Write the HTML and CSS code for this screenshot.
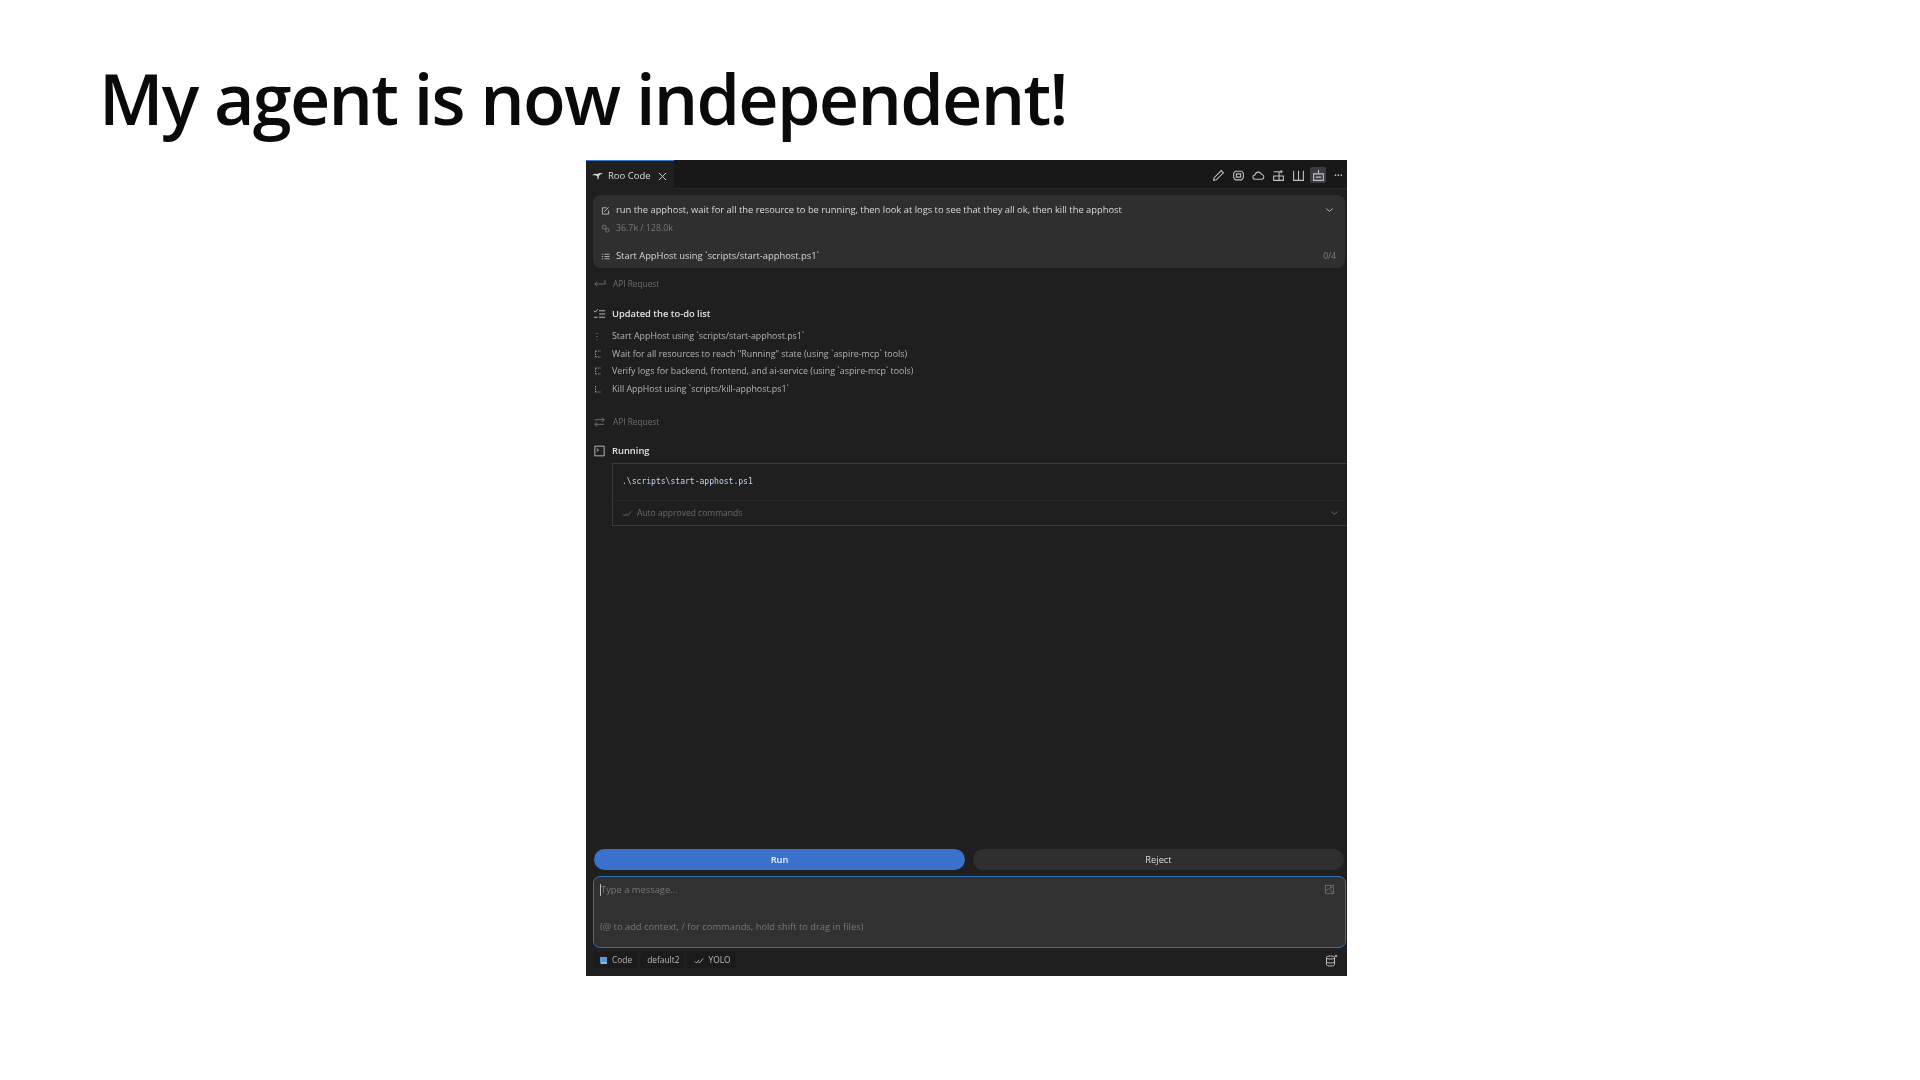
FILE: index.html
```html
<!DOCTYPE html>
<html lang="en">
<head>
<meta charset="utf-8">
<title>My agent is now independent!</title>
<link rel="stylesheet" href="styles.css">
</head>
<body>
<main class="slide">
  <h1 class="title">My agent is now independent!</h1>
  <section class="panel">
    <header class="tabbar">
      <div class="tab">
        <svg class="ic-roo" viewBox="0 0 12 8"><path d="M0 3.2 3 1.600 6 1.800 8 .6 12 1 8.600 2.600 7.400 4.200 7.200 7.600 6.200 7.600 5.600 4 3.400 3.200Z" fill="#d8d8d8"/></svg>
        <span class="tab-name">Roo Code</span>
        <svg class="ic-close" viewBox="0 0 10 10"><path d="M1 1 9 9M9 1 1 9" stroke="#d0d0d0" stroke-width="1.100"/></svg>
      </div>
      <div class="toolbar">
        <span class="tool"><svg viewBox="0 0 12 12"><path d="M1.500 10.500 2 8 8.500 1.500 10.500 3.500 4 10Z" class="ln"/></svg></span>
        <span class="tool"><svg viewBox="0 0 12 12"><path d="M3 2h6l1.500 2v4L9 10H3L1.500 8V4Z" class="ln"/><path d="M4 4.500h4v3H4Z" class="ln"/></svg></span>
        <span class="tool"><svg viewBox="0 0 12 12"><path d="M3 9.500a2 2 0 0 1-.3-4A3.300 3.300 0 0 1 9 5a2.300 2.300 0 0 1 .2 4.500Z" class="ln"/></svg></span>
        <span class="tool"><svg viewBox="0 0 12 12"><path d="M1.500 2.500h5v8h4v-4h-9v4h5V2.500M8.500 1v3M7 2.500h3" class="ln"/></svg></span>
        <span class="tool"><svg viewBox="0 0 12 12"><path d="M1.500 1.500v9h9v-9M6 1.500v9" class="ln"/></svg></span>
        <span class="tool tool-on"><svg viewBox="0 0 12 12"><path d="M1.500 4.500h9v6h-9ZM6 1v3.500M3.500 7.500h5" class="ln"/></svg></span>
        <span class="tool tool-more">···</span>
      </div>
    </header>

    <div class="body">
      <div class="task">
        <div class="task-row task-first">
          <svg class="ic-s" viewBox="0 0 10 10"><path d="M1.500 2h5M1.500 9h7M1.500 2v7M8.500 5v4M3.500 6.500 8.500 1.500" class="ln"/></svg>
          <span class="grow">run the apphost, wait for all the resource to be running, then look at logs to see that they all ok, then kill the apphost</span>
          <svg class="ic-chev" viewBox="0 0 10 6"><path d="M1.500 1.500 5 4.500 8.500 1.500" class="ln"/></svg>
        </div>
        <div class="task-row task-tokens">
          <svg class="ic-s dim" viewBox="0 0 10 10"><circle cx="3.500" cy="3.500" r="2.200" class="ln"/><circle cx="7" cy="7" r="2" class="ln"/></svg>
          <span>36.7k / 128.0k</span>
        </div>
        <div class="task-row task-todo">
          <svg class="ic-s" viewBox="0 0 10 10"><path d="M1 2.500h1.500M4 2.500h5.500M1 5h1.500M4 5h5.500M1 7.500h1.500M4 7.500h5.500" class="ln"/></svg>
          <span class="grow">Start AppHost using `scripts/start-apphost.ps1`</span>
          <span class="count">0/4</span>
        </div>
      </div>

      <div class="req req-first">
        <svg class="ic-m dim" viewBox="0 0 14 12"><path d="M13 2v4H2M4.500 3.500 2 6l2.500 2.500" class="ln"/></svg>
        <span>API Request</span>
      </div>

      <div class="head head-todo">
        <svg class="ic-m" viewBox="0 0 14 12"><path d="M1 2.500 2.500 4 5 1M6.500 2.500H13M6.500 6H13M1 9.500h4M6.500 9.500H13" class="ln"/></svg>
        <strong>Updated the to-do list</strong>
      </div>
      <ul class="todos">
        <li><svg class="ic-t" viewBox="0 0 8 8"><path d="M3 1v1M3 4v1M3 7v.5" class="ln"/></svg>Start AppHost using `scripts/start-apphost.ps1`</li>
        <li><svg class="ic-t" viewBox="0 0 8 8"><path d="M1.500 1H7M1.500 1v6M1.500 7H7" class="ln" stroke-dasharray="1.500 1"/></svg>Wait for all resources to reach "Running" state (using `aspire-mcp` tools)</li>
        <li><svg class="ic-t" viewBox="0 0 8 8"><path d="M1.500 1H7M1.500 1v6M1.500 7H7" class="ln" stroke-dasharray="1.500 1"/></svg>Verify logs for backend, frontend, and ai-service (using `aspire-mcp` tools)</li>
        <li><svg class="ic-t" viewBox="0 0 8 8"><path d="M1.500 1v6M1.500 7H7" class="ln" stroke-dasharray="1.500 1"/></svg>Kill AppHost using `scripts/kill-apphost.ps1`</li>
      </ul>

      <div class="req req-second">
        <svg class="ic-m dim" viewBox="0 0 14 12"><path d="M2 3.500h10M9.500 1 12 3.500 9.500 6M12 8.500H2M4.500 6 2 8.500 4.500 11" class="ln"/></svg>
        <span>API Request</span>
      </div>

      <div class="head head-run">
        <svg class="ic-m" viewBox="0 0 14 12"><path d="M2 .8h10v10.400H2Z" class="ln"/><path d="M4 3.500 6 5 4 6.500" class="ln"/></svg>
        <strong>Running</strong>
      </div>
      <div class="cmd">
        <code class="cmd-line">.\scripts\start-apphost.ps1</code>
        <div class="cmd-foot">
          <svg class="ic-ck dim" viewBox="0 0 12 8"><path d="M1 5 3 7 6 3.500M5.500 6 6.500 7 11 1.500" class="ln"/></svg>
          <span class="grow">Auto approved commands</span>
          <svg class="ic-chev dim" viewBox="0 0 10 6"><path d="M1.500 1.500 5 4.500 8.500 1.500" class="ln"/></svg>
        </div>
      </div>

      <div class="spacer"></div>

      <div class="actions">
        <button class="btn btn-run" type="button">Run</button>
        <button class="btn btn-reject" type="button">Reject</button>
      </div>

      <div class="input">
        <div class="input-top">
          <span class="caret"></span><span class="grow">Type a message...</span>
          <svg class="ic-img" viewBox="0 0 12 12"><path d="M1.500 1.500h9v9h-9ZM1.500 8 5 5l5.500 5M7 3h1.500v1.500H7Z" class="ln"/></svg>
        </div>
        <div class="input-hint">(@ to add context, / for commands, hold shift to drag in files)</div>
      </div>

      <footer class="foot">
        <span class="chip"><svg class="ic-book" viewBox="0 0 8 9"><path d="M0 1h7v7H1.500L0 7Z" fill="#5a9ad8"/><path d="M1.500 8V7H7" stroke="#cfe2f5" stroke-width=".8" fill="none"/></svg>Code</span>
        <span class="chip">default2</span>
        <span class="chip"><svg class="ic-ck" viewBox="0 0 12 8"><path d="M1 5 3 7 6 3.500M5.500 6 6.500 7 11 1.500" class="ln"/></svg>YOLO</span>
        <svg class="ic-db" viewBox="0 0 13 13"><path d="M1.500 3.500C1.500 2.500 3 2 5.500 2S9.500 2.500 9.500 3.500V10.500C9.500 11.500 8 12 5.500 12S1.500 11.500 1.500 10.500ZM1.500 3.500C1.500 4.500 3 5 5.500 5S9.500 4.500 9.500 3.500M1.500 7.500C1.500 8.500 3 9 5.500 9S9.500 8.500 9.500 7.500" class="ln"/><circle cx="11" cy="2" r="1.300" fill="#9a9a9a"/></svg>
      </footer>
    </div>
  </section>
</main>
</body>
</html>
```
FILE: styles.css
```css
* { box-sizing: border-box; }
html, body { margin: 0; height: 100%; background: #fff; }
.slide { width: 1920px; height: 1080px; padding: 50px 0 0 100px; display: flex; flex-direction: column; align-items: flex-start; overflow: hidden; }
.title { margin: 0 0 0 -1px; font: 600 70px/96px "Open Sans", sans-serif; letter-spacing: -1.720px; color: #0a0a0a; white-space: nowrap; }
.panel { margin: 14px 0 0 486px; width: 761px; height: 816px; background: #1f1f1f; display: flex; flex-direction: column; font: 9.350px/12px "Open Sans", sans-serif; color: #cfcfcf; filter: blur(.3px); }
svg { display: block; flex: none; }
.ln { fill: none; stroke: #c0c0c0; stroke-width: 1; }
.dim { opacity: .5; }
.grow { flex: 1; min-width: 0; white-space: nowrap; }

.tabbar { height: 29px; flex: none; display: flex; justify-content: space-between; background: #181818; border-bottom: 1px solid #2a2a2a; }
.tab { width: 88px; height: 29px; background: #1f1f1f; border-top: 1px solid #3a78c8; display: flex; align-items: center; padding: 2px 7px 0 6px; }
.ic-roo { width: 11px; height: 8px; margin-right: 5px; }
.tab-name { flex: 1; font-size: 9.500px; color: #dcdcdc; }
.ic-close { width: 9px; height: 9px; }
.toolbar { display: flex; align-items: center; gap: 4px; padding: 2px 1px 0 0; }
.tool { width: 16px; height: 16px; display: flex; align-items: center; justify-content: center; border-radius: 2px; }
.tool svg { width: 13px; height: 13px; }
.tool-on { background: #3a3d41; }
.tool-more { color: #c0c0c0; font-size: 13px; letter-spacing: -.6px; }

.body { flex: 1; min-height: 0; display: flex; flex-direction: column; padding: 6px 0 0 7px; }
.task { width: 752px; height: 73px; background: #2f2f2f; border-radius: 8px; padding: 9px 11px 0 8px; flex: none; }
.task-row { display: flex; align-items: center; gap: 6px; height: 12px; white-space: nowrap; }
.task-first { color: #dadada; }
.task-tokens { margin-top: 6px; color: #777; font-size: 8.800px; }
.task-todo { margin-top: 16px; color: #d6d6d6; }
.ic-s { width: 9px; height: 9px; }
.ic-chev { width: 9px; height: 6px; }
.count { color: #808080; font-size: 8.500px; margin-right: -2px; }

.req { display: flex; align-items: center; gap: 7px; color: #6e6e6e; height: 14px; flex: none; font-size: 8.300px; }
.req-first { margin-top: 9px; }
.req-second { margin-top: 17px; }
.ic-m { width: 13px; height: 12px; }
.head { display: flex; align-items: center; gap: 6px; height: 14px; flex: none; color: #e2e2e2; }
.head strong { font-weight: 600; }
.head-todo { margin-top: 16px; }
.head-run { margin-top: 15px; }
.todos { list-style: none; margin: 6px 0 0; padding: 0; flex: none; color: #b4b4b4; font-size: 8.850px; }
.todos li { display: flex; align-items: center; gap: 5px; height: 17.700px; white-space: nowrap; }
.ic-t { width: 8px; height: 8px; margin-right: 5px; opacity: .7; margin-left: 1px; }

.cmd { margin: 5px 0 0 19px; width: 735px; height: 63px; flex: none; border: 1px solid #3c3c3c; border-right: 0; display: flex; flex-direction: column; }
.cmd-line { height: 37px; flex: none; padding: 11px 0 0 9px; font: 8.050px/13px "DejaVu Sans Mono", monospace; color: #c2d4ee; border-bottom: 1px solid #262626; }
.cmd-foot { flex: 1; display: flex; align-items: center; gap: 5px; padding: 1px 8px 0 9px; color: #6a6a6a; font-size: 8.500px; }
.ic-ck { width: 10px; height: 7px; }

.spacer { flex: 1; }
.actions { display: flex; gap: 8px; flex: none; width: 750px; margin-left: 1px; }
.btn { flex: 1; height: 21px; border: 0; padding: 1px 0 0; border-radius: 11px; font: 600 9.300px/20px "Open Sans", sans-serif; }
.btn-run { background: #3a71cc; color: #f2f2f2; }
.btn-reject { background: #2f2f2f; color: #dcdcdc; font-weight: 400; }

.input { margin-top: 6px; width: 753px; height: 72px; flex: none; background: #313131; border: 1px solid #2f6fb4; border-radius: 7px; padding: 0 6px; color: #777; display: flex; flex-direction: column; justify-content: space-between; }
.input-top { display: flex; align-items: center; height: 21px; margin-top: 2px; }
.caret { width: 1px; height: 12px; background: #bbb; }
.ic-img { width: 11px; height: 11px; opacity: .45; margin-right: 4px; }
.input-hint { margin-bottom: 14px; white-space: nowrap; }

.foot { height: 28px; flex: none; display: flex; align-items: center; gap: 3px; padding: 0 9px 4px 0; color: #b8b8b8; font-size: 8.400px; }
.chip { display: flex; align-items: center; gap: 4px; height: 16px; padding: 0 5px 0 7px; background: #1b1b1b; border-radius: 3px; }
.ic-book { width: 8px; height: 9px; }
.ic-db { width: 13px; height: 13px; margin-left: auto; }
```
